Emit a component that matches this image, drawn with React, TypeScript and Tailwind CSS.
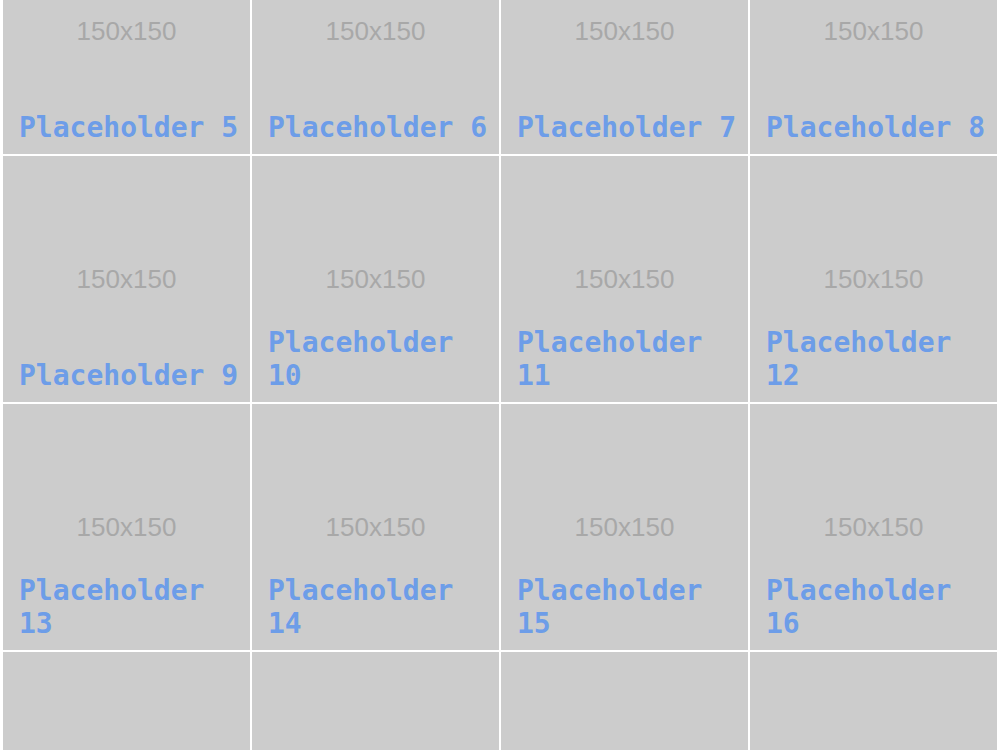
import React from "react";

const items = Array.from({ length: 16 }, (_, i) => i + 5);

function Tile({ n }: { n: number }) {
  return (
    <div className="relative m-[1px] h-[246px] bg-[#cccccc]">
      <div className="flex h-full items-center justify-center">
        <span className="font-['Liberation_Sans',Arial,sans-serif] text-[26px] leading-none text-[#a8a8a8]">
          150x150
        </span>
      </div>
      <div className="absolute bottom-[10px] left-[16px] right-[8px] font-['DejaVu_Sans_Mono',monospace] text-[28px] font-bold leading-[33px] text-[#6d9de8]">
        Placeholder {n}
      </div>
    </div>
  );
}

export default function App() {
  return (
    <div className="h-[750px] overflow-hidden bg-white">
      <div className="-mt-[93px] grid grid-cols-4 px-[2px]">
        {items.map((n) => (
          <Tile key={n} n={n} />
        ))}
      </div>
    </div>
  );
}
